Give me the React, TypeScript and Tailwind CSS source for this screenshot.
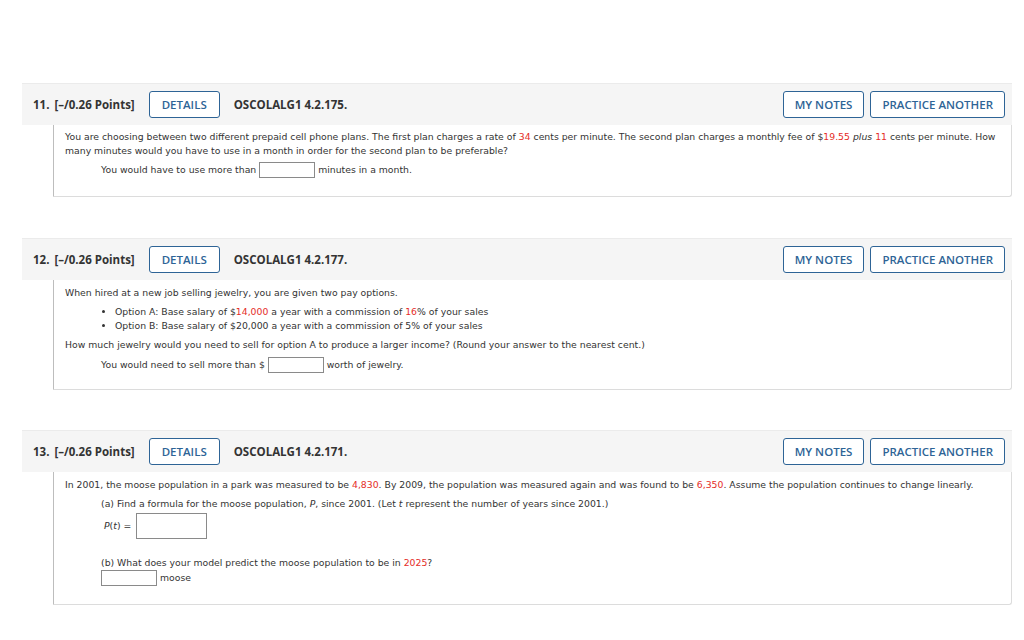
import React from "react";

const Red = ({ children }: { children: React.ReactNode }) => (
  <span className="text-[#e52d27]">{children}</span>
);

const Blank = ({ w = "w-[56px]", h = "h-[16px]" }: { w?: string; h?: string }) => (
  <span className={`inline-block align-middle ${w} ${h} border border-[#8a8a8a] bg-white`} />
);

const Header = ({ num, code }: { num: number; code: string }) => (
  <div className="flex items-center h-[42px] bg-[#f5f5f5] border-t border-[#ebebeb] pl-[11px] pr-[7px] font-['Open_Sans',sans-serif] text-[11.5px] text-[#333]">
    <span className="font-bold">{num}.</span>
    <span className="font-bold ml-[5px]">[–/0.26 Points]</span>
    <button className="ml-[14px] h-[27px] px-[12px] border-[1.5px] border-[#2e6496] rounded-[3px] bg-white text-[#2e6496] font-semibold">
      DETAILS
    </button>
    <span className="font-bold ml-[14px]">{code}</span>
    <div className="ml-auto flex gap-[6px]">
      <button className="h-[27px] px-[11px] border-[1.5px] border-[#2e6496] rounded-[3px] bg-white text-[#2e6496] font-semibold">
        MY NOTES
      </button>
      <button className="h-[27px] px-[11px] border-[1.5px] border-[#2e6496] rounded-[3px] bg-white text-[#2e6496] font-semibold">
        PRACTICE ANOTHER
      </button>
    </div>
  </div>
);

const Body = ({ children, h }: { children: React.ReactNode; h: string }) => (
  <div
    className={`ml-[31px] ${h} border-l border-l-[#bdbdbd] border-r border-b border-[#dcdcdc] rounded-br-[3px] pl-[11px] pr-[10px] pt-[5px] font-['DejaVu_Sans',Verdana,sans-serif] text-[9.3px] leading-[14px] text-[#333]`}
  >
    {children}
  </div>
);

export default function App() {
  return (
    <div className="w-[1024px] h-[640px] bg-white overflow-hidden">
      <div className="ml-[22px] w-[990px] pt-[83px]">
        <section>
          <Header num={11} code="OSCOLALG1 4.2.175." />
          <Body h="h-[72px]">
            <p>
              You are choosing between two different prepaid cell phone plans. The first plan charges a rate of{" "}
              <Red>34</Red> cents per minute. The second plan charges a monthly fee of $<Red>19.55</Red> <i>plus</i>{" "}
              <Red>11</Red> cents per minute. How many minutes would you have to use in a month in order for the second
              plan to be preferable?
            </p>
            <p className="ml-[36px] mt-[4px]">
              You would have to use more than <Blank /> minutes in a month.
            </p>
          </Body>
        </section>

        <section className="mt-[41px]">
          <Header num={12} code="OSCOLALG1 4.2.177." />
          <Body h="h-[110px]">
            <p className="mt-[1px]">When hired at a new job selling jewelry, you are given two pay options.</p>
            <ul className="ml-[40px] mt-[5px] list-disc pl-[10px]">
              <li>
                Option A: Base salary of $<Red>14,000</Red> a year with a commission of <Red>16</Red>% of your sales
              </li>
              <li>Option B: Base salary of $20,000 a year with a commission of 5% of your sales</li>
            </ul>
            <p className="mt-[5px]">
              How much jewelry would you need to sell for option A to produce a larger income? (Round your answer to the
              nearest cent.)
            </p>
            <p className="ml-[36px] mt-[5px]">
              You would need to sell more than $ <Blank /> worth of jewelry.
            </p>
          </Body>
        </section>

        <section className="mt-[40px]">
          <Header num={13} code="OSCOLALG1 4.2.171." />
          <Body h="h-[133px]">
            <p className="mt-[1px]">
              In 2001, the moose population in a park was measured to be <Red>4,830</Red>. By 2009, the population was
              measured again and was found to be <Red>6,350</Red>. Assume the population continues to change linearly.
            </p>
            <div className="ml-[36px]">
              <p className="mt-[5px]">
                (a) Find a formula for the moose population, <i>P</i>, since 2001. (Let <i>t</i> represent the number of
                years since 2001.)
              </p>
              <div className="mt-[2px] flex items-center ml-[3px]">
                <span>
                  <i>P</i>(<i>t</i>) =
                </span>
                <span className="ml-[5px]">
                  <Blank w="w-[71px]" h="h-[26px]" />
                </span>
              </div>
              <p className="mt-[17px]">
                (b) What does your model predict the moose population to be in <Red>2025</Red>?
              </p>
              <p>
                <Blank /> moose
              </p>
            </div>
          </Body>
        </section>
      </div>
    </div>
  );
}
